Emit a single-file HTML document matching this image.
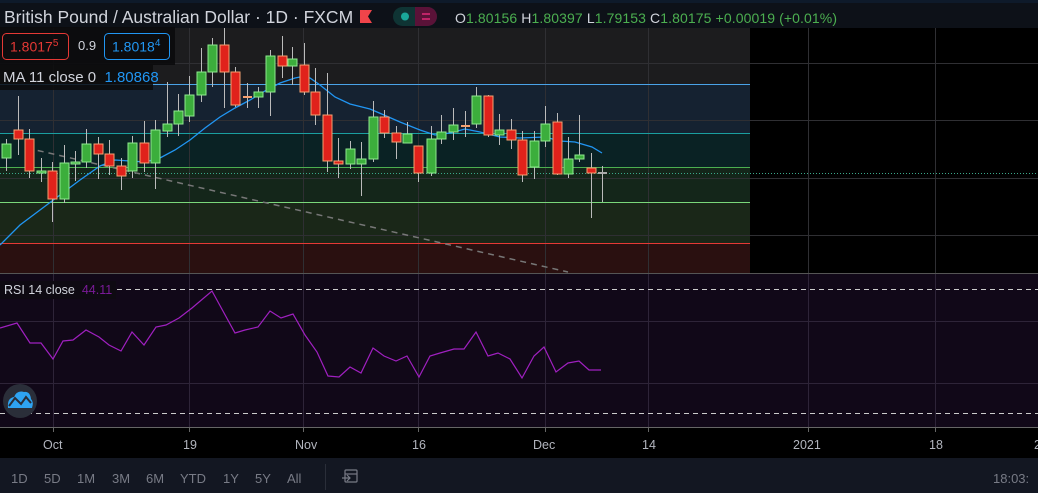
<!DOCTYPE html>
<html><head><meta charset="utf-8"><style>
html,body{margin:0;padding:0;background:#000;width:1038px;height:493px;overflow:hidden;font-family:"Liberation Sans",sans-serif}
.t{position:absolute;white-space:nowrap}
</style></head><body>
<div style="position:relative;width:1038px;height:493px">
<svg width="1038" height="493" style="position:absolute;left:0;top:0" xmlns="http://www.w3.org/2000/svg">
<rect x="0" y="0" width="1038" height="493" fill="#000"/>
<rect x="0" y="28" width="750" height="56" fill="#1c1c1e"/>
<rect x="0" y="84" width="750" height="49" fill="#152231"/>
<rect x="0" y="133" width="750" height="34" fill="#0a2224"/>
<rect x="0" y="167" width="750" height="35" fill="#14261a"/>
<rect x="0" y="202" width="750" height="41" fill="#1a2718"/>
<rect x="0" y="243" width="750" height="30" fill="#2a1010"/>
<g stroke="#2f2f33" stroke-width="1">
<line x1="0" y1="63.5" x2="1038" y2="63.5"/><line x1="0" y1="120.5" x2="1038" y2="120.5"/>
<line x1="0" y1="178.5" x2="1038" y2="178.5"/><line x1="0" y1="235.5" x2="1038" y2="235.5"/>
<line x1="53.5" y1="0" x2="53.5" y2="427"/><line x1="189.5" y1="0" x2="189.5" y2="427"/>
<line x1="303.5" y1="0" x2="303.5" y2="427"/><line x1="418.5" y1="0" x2="418.5" y2="427"/>
<line x1="545.5" y1="0" x2="545.5" y2="427"/><line x1="648.5" y1="0" x2="648.5" y2="427"/>
<line x1="808.5" y1="0" x2="808.5" y2="427"/><line x1="935.5" y1="0" x2="935.5" y2="427"/>
</g>
<line x1="0" y1="84.5" x2="750" y2="84.5" stroke="#4aa3e8"/>
<line x1="0" y1="133.5" x2="750" y2="133.5" stroke="#1a9fa0"/>
<line x1="0" y1="167.5" x2="750" y2="167.5" stroke="#4caf50"/>
<line x1="0" y1="202.5" x2="750" y2="202.5" stroke="#7ad87a"/>
<line x1="0" y1="243.5" x2="750" y2="243.5" stroke="#e53935"/>
<line x1="0" y1="173.5" x2="1038" y2="173.5" stroke="#3aa88a" stroke-dasharray="1,2"/>
<line x1="27" y1="148" x2="568" y2="272" stroke="#777" stroke-width="1.5" stroke-dasharray="6,5"/>
<polyline fill="none" stroke="#2196f3" stroke-width="1.3" points="0,245 20,225 40,210 60,195 80,180 100,166 115,160 130,161 145,162 160,158 175,150 190,140 205,128 220,117 235,108 250,100 265,91 280,83 295,78 300,77 310,78 320,85 335,97 350,104 370,109 384,115 400,122 420,130 435,135 450,133 465,129 480,132 500,137 520,138 545,137 560,141 575,142 592,147 602,153"/>
<g id="c"></g>
<rect x="0" y="274" width="1038" height="153" fill="#110818"/>
<line x1="0" y1="273.5" x2="1038" y2="273.5" stroke="#555"/>
<g stroke="#2e2438"><line x1="0" y1="321.5" x2="1038" y2="321.5"/><line x1="0" y1="383.5" x2="1038" y2="383.5"/>
<line x1="53.5" y1="274" x2="53.5" y2="427"/><line x1="189.5" y1="274" x2="189.5" y2="427"/><line x1="303.5" y1="274" x2="303.5" y2="427"/><line x1="418.5" y1="274" x2="418.5" y2="427"/><line x1="545.5" y1="274" x2="545.5" y2="427"/><line x1="648.5" y1="274" x2="648.5" y2="427"/><line x1="808.5" y1="274" x2="808.5" y2="427"/><line x1="935.5" y1="274" x2="935.5" y2="427"/></g>
<line x1="0" y1="289.5" x2="1038" y2="289.5" stroke="#ccc" stroke-dasharray="5,4"/>
<line x1="0" y1="413.5" x2="1038" y2="413.5" stroke="#ccc" stroke-dasharray="5,4"/>
<polyline fill="none" stroke="#a020c0" stroke-width="1.2" points="0,328 17,323 30,343 41,343 53,359 63,341 73,340 86,330 99,337 109,345 121,351 132,332 144,345 156,327 166,325 179,318 192,308 212,291 235,333 245,330 258,327 270,311 281,318 293,314 305,335 317,352 328,376 339,377 350,367 361,373 373,348 384,356 396,361 407,356 419,377 430,356 440,353 454,349 464,349 476,332 488,356 498,353 510,359 522,378 534,356 544,347 556,372 568,363 579,361 589,370 601,370"/>
<line x1="0" y1="427.5" x2="1038" y2="427.5" stroke="#666"/>
<g stroke="#666"><line x1="53.5" y1="428" x2="53.5" y2="432"/><line x1="189.5" y1="428" x2="189.5" y2="432"/><line x1="303.5" y1="428" x2="303.5" y2="432"/><line x1="418.5" y1="428" x2="418.5" y2="432"/><line x1="545.5" y1="428" x2="545.5" y2="432"/><line x1="648.5" y1="428" x2="648.5" y2="432"/><line x1="808.5" y1="428" x2="808.5" y2="432"/><line x1="935.5" y1="428" x2="935.5" y2="432"/></g>
<circle cx="20" cy="401" r="17" fill="#2a2e39"/>
<path d="M8,408 Q7,398 14,397 Q17,390 24,392 Q30,391 31,399 Q34,402 32,408 Z" fill="#2ea3f2"/>
<polyline points="9,406 15,398 21,404 26,397 31,403" fill="none" stroke="#2a2e39" stroke-width="2"/>
<rect x="0" y="0" width="1038" height="28" fill="#0d1118"/>
<rect x="0" y="0" width="1038" height="3" fill="#0e1a2a"/>
<rect x="0" y="27" width="175" height="38" fill="#0b0b0c" opacity="0.9"/>
<rect x="0" y="65" width="153" height="25" fill="#0b0b0c" opacity="0.85"/>
<rect x="2.5" y="33.5" width="66" height="26" rx="4" fill="none" stroke="#e53935"/>
<rect x="104.5" y="33.5" width="65" height="26" rx="4" fill="none" stroke="#2196f3"/>
<path d="M360,10 H372 L368,16.5 L372,23 H360 Z" fill="#f0444a"/>
<rect x="393" y="7" width="44" height="19" rx="9.5" fill="#0f3434"/>
<path d="M415,7 H427.5 A9.5,9.5 0 0 1 427.5,26 H415 Z" fill="#5a1238"/>
<circle cx="405" cy="16.5" r="4" fill="#1aa89a"/>
<g stroke="#e02a78" stroke-width="1.5"><line x1="422" y1="14" x2="430" y2="14"/><line x1="422" y1="19" x2="430" y2="19"/></g>
<rect x="0" y="458" width="1038" height="35" fill="#131722"/>
<line x1="325.5" y1="464" x2="325.5" y2="490" stroke="#2a2e39"/>
<g fill="none" stroke="#787b86" stroke-width="1.2"><rect x="345" y="470" width="12" height="12" rx="1"/><line x1="345" y1="474" x2="357" y2="474"/><path d="M342,478 H350 M347,475 L350,478 L347,481"/></g>
</svg>
<div class="t" style="left:4px;top:7px;font-size:17.5px;color:#d1d4dc">British Pound / Australian Dollar · 1D · FXCM</div>
<div class="t" style="left:455px;top:10px;font-size:14px;color:#d1d4dc;letter-spacing:0.1px">O<span style="color:#4caf50">1.80156</span> H<span style="color:#4caf50">1.80397</span> L<span style="color:#4caf50">1.79153</span> C<span style="color:#4caf50">1.80175</span> <span style="color:#4caf50">+0.00019 (+0.01%)</span></div>
<div class="t" style="left:10px;top:38px;font-size:14px;color:#e53935">1.8017<sup style="font-size:10px">5</sup></div>
<div class="t" style="left:78px;top:38px;font-size:13px;color:#d1d4dc">0.9</div>
<div class="t" style="left:112px;top:38px;font-size:14px;color:#2196f3">1.8018<sup style="font-size:10px">4</sup></div>
<div class="t" style="left:3px;top:69px;font-size:15px;color:#d1d4dc">MA 11 close 0 <span style="color:#2196f3">&nbsp;1.80868</span></div>
<div class="t" style="left:0;top:281px;padding:2px 4px;font-size:12.5px;color:#d1d4dc;background:#0e0a12">RSI 14 close <span style="color:#7a1a98">&nbsp;44.11</span></div>
<div style="position:absolute;top:438px;left:0;width:1038px;font-size:12.5px;color:#b2b5be">
<span class="t" style="left:43px">Oct</span><span class="t" style="left:183px">19</span><span class="t" style="left:295px">Nov</span><span class="t" style="left:412px">16</span><span class="t" style="left:533px">Dec</span><span class="t" style="left:642px">14</span><span class="t" style="left:793px">2021</span><span class="t" style="left:929px">18</span><span class="t" style="left:1034px">2</span></div>
<div style="position:absolute;top:471px;left:0;width:1038px;font-size:13px;color:#787b86">
<span class="t" style="left:11px">1D</span><span class="t" style="left:44px">5D</span><span class="t" style="left:77px">1M</span><span class="t" style="left:112px">3M</span><span class="t" style="left:146px">6M</span><span class="t" style="left:180px">YTD</span><span class="t" style="left:223px">1Y</span><span class="t" style="left:255px">5Y</span><span class="t" style="left:287px">All</span><span class="t" style="left:993px">18:03:</span></div>
</div>
<script>
var d=[[6,'g',144,158,139,171],[18,'r',130,139,96,155],[29,'r',139,171,129,178],[41,'g',171,171,158,182],[52,'r',171,199,162,222],[64,'g',163,199,145,203],[75,'g',162,162,151,181],[86,'g',144,162,129,168],[98,'r',144,154,137,179],[109,'r',154,166,140,175],[121,'r',166,176,158,190],[132,'g',143,171,136,178],[144,'r',143,163,121,172],[155,'g',130,163,120,189],[167,'g',124,131,82,137],[178,'g',111,124,94,136],[189,'g',95,116,76,122],[201,'g',72,95,48,102],[212,'g',45,72,38,87],[224,'r',45,72,27,108],[235,'r',72,105,67,107],[247,'o',97,97,83,108],[258,'g',92,97,87,108],[270,'g',56,92,50,116],[282,'r',56,66,36,78],[292,'g',59,66,47,85],[304,'r',65,92,43,95],[315,'r',92,115,68,125],[327,'r',115,161,73,172],[338,'r',161,164,138,178],[350,'g',149,164,141,169],[361,'g',159,164,142,196],[373,'g',117,159,101,162],[384,'r',117,133,110,138],[396,'r',133,142,126,159],[407,'g',134,143,122,143],[418,'r',146,173,146,182],[431,'g',139,173,126,176],[441,'g',132,139,115,144],[453,'g',125,132,108,140],[465,'o',126,126,111,137],[476,'g',96,124,87,128],[488,'r',96,135,95,137],[499,'g',130,135,114,145],[511,'r',130,140,119,149],[522,'r',140,175,131,182],[534,'g',141,167,131,179],[545,'g',124,141,106,147],[557,'r',122,174,113,175],[568,'g',159,174,137,178],[579,'g',155,159,115,162],[591,'r',168,173,153,218],[602,'w',173,173,166,202]];
var s='';d.forEach(function(c){var x=c[0],h=c[3]-c[2];s+='<line x1="'+(x+.5)+'" y1="'+c[4]+'" x2="'+(x+.5)+'" y2="'+c[5]+'" stroke="#bbb"/>';
if(c[1]=='o'||c[1]=='w'){s+='<rect x="'+(x-4)+'" y="'+(c[2]-1)+'" width="9" height="2" fill="'+(c[1]=='o'?'#f5a070':'#aaa')+'"/>';return;}
if(h<2)h=2;var f=c[1]=='g'?'#3cae3c':'#e0221b',st=c[1]=='g'?'#8ee88e':'#f5a070';
s+='<rect x="'+(x-4)+'" y="'+c[2]+'" width="9" height="'+h+'" fill="'+f+'" stroke="'+st+'" stroke-width="1"/>';});
document.getElementById('c').innerHTML=s;
</script>
</body></html>
